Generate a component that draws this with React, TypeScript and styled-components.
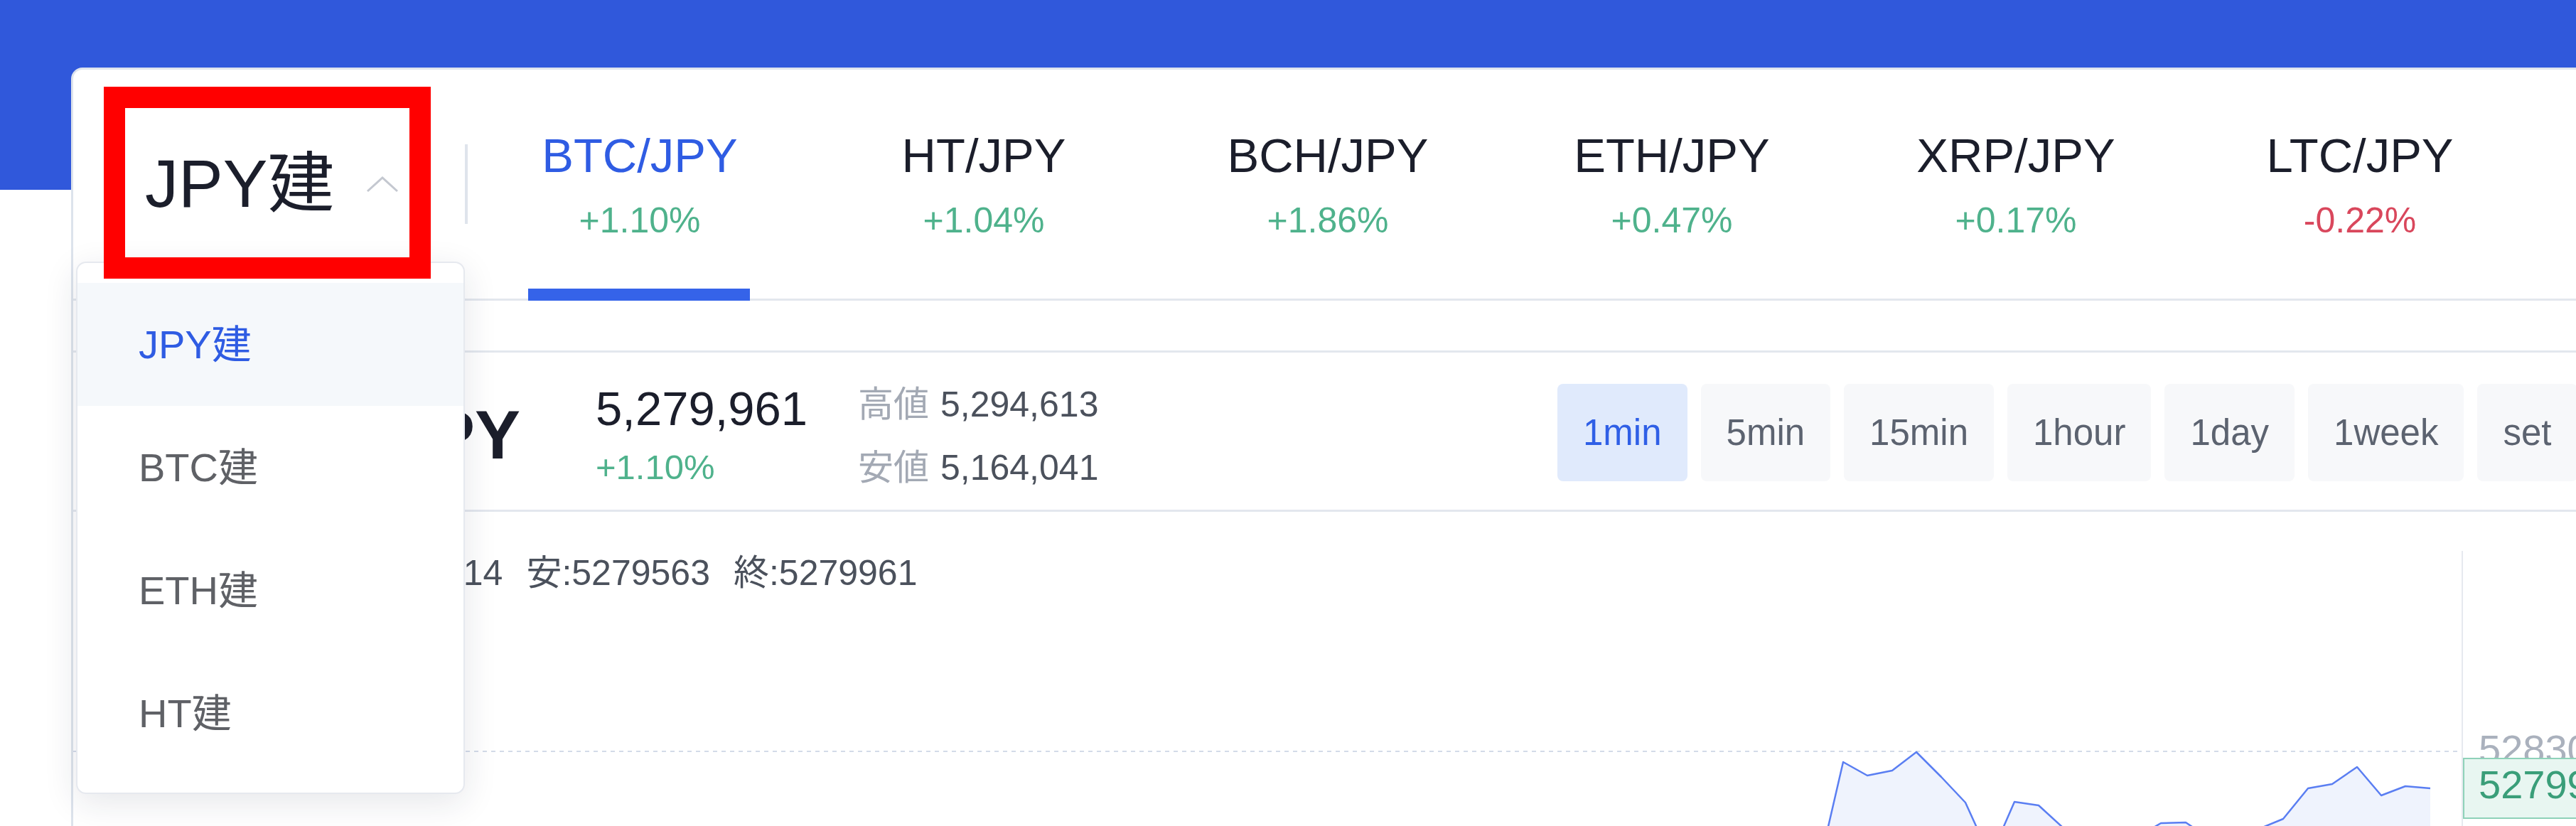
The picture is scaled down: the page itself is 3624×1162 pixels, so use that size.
import React from "react";
import styled, { createGlobalStyle } from "styled-components";

const GlobalStyle = createGlobalStyle`
  html, body { margin: 0; padding: 0; background: #ffffff; overflow: hidden; }
  body { font-family: "Liberation Sans", "Noto Sans CJK JP", sans-serif; }
  *, *::before, *::after { box-sizing: border-box; }
`;

const Page = styled.div`
  width: 3624px;
  height: 1162px;
  overflow: hidden;
  padding: 95px 0 0 100px;
  background: linear-gradient(#3058db 0, #3058db 267px, #ffffff 267px);
`;

const Card = styled.div`
  width: 3640px;
  min-height: 1200px;
  background: #ffffff;
  border-top: 3px solid #dfe5ee;
  border-left: 3px solid #dde3ec;
  border-top-left-radius: 16px;
`;

/* ---------- tab bar ---------- */

const TabBar = styled.div`
  display: flex;
  height: 325px;
  border-bottom: 3px solid #e3e7ee;
`;

const Selector = styled.div`
  position: relative;
  flex: 0 0 551px;
  display: flex;
  align-items: center;
  padding-left: 101px;
`;

const SelectorLabel = styled.span`
  font-size: 94px;
  line-height: 1;
  color: #1b1e2b;
  white-space: nowrap;
`;

const Chevron = styled.svg`
  width: 46px;
  height: 24px;
  margin-left: 45px;
  flex: none;
`;

const Divider = styled.div`
  flex: 0 0 4px;
  height: 112px;
  align-self: center;
  background: #dfe4ec;
`;

const Tab = styled.div<{ $active?: boolean }>`
  position: relative;
  flex: 0 0 484px;
  display: flex;
  flex-direction: column;
  align-items: center;
  justify-content: center;
  padding-top: 2px;
  &::after {
    content: "";
    display: ${(p) => (p.$active ? "block" : "none")};
    position: absolute;
    left: 50%;
    bottom: -3px;
    width: 312px;
    margin-left: -157px;
    height: 17px;
    background: #3563e9;
  }
`;

const TabName = styled.div<{ $active?: boolean }>`
  font-size: 67px;
  line-height: 1;
  color: ${(p) => (p.$active ? "#2f5ce3" : "#1b1e2b")};
  white-space: nowrap;
`;

const Change = styled.div<{ $down?: boolean; $size?: number }>`
  font-size: ${(p) => p.$size ?? 50}px;
  line-height: 1;
  color: ${(p) => (p.$down ? "#d9475c" : "#4fb28c")};
  white-space: nowrap;
`;

const TabChange = styled(Change)`
  margin-top: 33px;
`;

/* ---------- dropdown ---------- */

const Dropdown = styled.ul`
  position: absolute;
  left: 4px;
  top: 270px;
  width: 547px;
  height: 749px;
  margin: 0;
  padding: 28px 0 0;
  list-style: none;
  background: #ffffff;
  border: 2px solid #e6e9ef;
  border-radius: 14px;
  box-shadow: 0 12px 48px rgba(25, 35, 60, 0.11);
  z-index: 10;
`;

const DropItem = styled.li<{ $active?: boolean }>`
  height: 173px;
  display: flex;
  align-items: center;
  padding-left: 86px;
  font-size: 56px;
  line-height: 1;
  color: ${(p) => (p.$active ? "#2f5ce3" : "#5f6166")};
  background: ${(p) => (p.$active ? "#f5f8fb" : "transparent")};
`;

const Highlight = styled.div`
  position: absolute;
  left: 43px;
  top: 24px;
  width: 460px;
  height: 270px;
  border: 30px solid #ff0000;
  z-index: 20;
  pointer-events: none;
`;

/* ---------- price panel ---------- */

const PricePanel = styled.div`
  margin-top: 70px;
  height: 227px;
  padding-top: 10px;
  border-top: 3px solid #e3e7ee;
  border-bottom: 3px solid #e3e7ee;
  display: flex;
  align-items: center;
`;

const PairName = styled.div`
  flex: 0 0 629px;
  text-align: right;
  font-size: 96px;
  font-weight: 700;
  line-height: 1;
  color: #1b1e2b;
  white-space: nowrap;
`;

const PriceBlock = styled.div`
  flex: 0 0 475px;
  padding-left: 106px;
  display: flex;
  flex-direction: column;
`;

const LastPrice = styled.div`
  font-size: 67px;
  line-height: 1;
  color: #1b1e2b;
`;

const PriceChange = styled(Change)`
  margin-top: 25px;
`;

const HighLow = styled.div`
  flex: 0 0 984px;
  display: flex;
  flex-direction: column;
  gap: 39px;
  margin-top: 4px;
`;

const StatRow = styled.div`
  font-size: 50px;
  line-height: 50px;
  white-space: nowrap;
  color: #4b515c;
`;

const StatLabel = styled.span`
  color: #a3a9b4;
  margin-right: 16px;
`;

const Timeframes = styled.div`
  display: flex;
  gap: 19px;
  margin-top: -6px;
`;

const TfButton = styled.div<{ $active?: boolean }>`
  height: 137px;
  padding: 0 36px;
  display: flex;
  align-items: center;
  border-radius: 8px;
  font-size: 51px;
  line-height: 1;
  white-space: nowrap;
  color: ${(p) => (p.$active ? "#2f5fe6" : "#5c6370")};
  background: ${(p) => (p.$active ? "#e0eafc" : "#f7f8fa")};
`;

/* ---------- chart ---------- */

const ChartPanel = styled.div`
  display: flex;
  padding-top: 55px;
  height: 500px;
`;

const Plot = styled.div`
  position: relative;
  flex: 0 0 3360px;
  height: 445px;
`;

const Legend = styled.div`
  position: absolute;
  top: 6px;
  left: 58px;
  display: flex;
  gap: 33px;
  font-size: 50px;
  line-height: 1;
  color: #4b515c;
  white-space: nowrap;
`;

const ChartSvg = styled.svg`
  display: block;
`;

const Axis = styled.div`
  position: relative;
  flex: 1;
  border-left: 2px solid #e6e9ef;
`;

const AxisLabel = styled.div`
  position: absolute;
  left: 22px;
  top: 251px;
  font-size: 56px;
  line-height: 1;
  color: #aab1bd;
`;

const PriceTag = styled.div`
  position: absolute;
  left: 0;
  top: 291px;
  width: 320px;
  height: 86px;
  padding-left: 20px;
  border: 2px solid #8fd2b9;
  background: #e8f6f1;
  font-size: 56px;
  line-height: 72px;
  color: #3a9e79;
`;

const tabs = [
  { name: "BTC/JPY", change: "+1.10%", active: true },
  { name: "HT/JPY", change: "+1.04%" },
  { name: "BCH/JPY", change: "+1.86%" },
  { name: "ETH/JPY", change: "+0.47%" },
  { name: "XRP/JPY", change: "+0.17%" },
  { name: "LTC/JPY", change: "-0.22%", down: true },
];

const markets = ["JPY建", "BTC建", "ETH建", "HT建"];
const frames = ["1min", "5min", "15min", "1hour", "1day", "1week", "set"];

const pts: [number, number][] = [
  [2300, 470], [2456, 444], [2490, 297], [2524, 316], [2559, 309], [2593, 283],
  [2628, 318], [2662, 354], [2697, 431], [2731, 353], [2765, 358], [2800, 390],
  [2834, 425], [2869, 420], [2903, 403], [2937, 383], [2972, 382], [3006, 405],
  [3041, 417], [3075, 391], [3109, 377], [3144, 334], [3178, 328], [3213, 304],
  [3247, 344], [3281, 331], [3316, 334],
];

const linePath = pts.map((p, i) => `${i ? "L" : "M"}${p[0]} ${p[1]}`).join(" ");
const areaPath = `${linePath} L3316 445 L2300 445 Z`;

export default function App() {
  return (
    <>
      <GlobalStyle />
      <Page>
        <Card>
          <TabBar>
            <Selector>
              <SelectorLabel>JPY建</SelectorLabel>
              <Chevron viewBox="0 0 46 24">
                <polyline points="2,22 23,3 44,22" fill="none" stroke="#c4c8d0" strokeWidth="3" />
              </Chevron>
              <Highlight />
              <Dropdown>
                {markets.map((m, i) => (
                  <DropItem key={m} $active={i === 0}>
                    {m}
                  </DropItem>
                ))}
              </Dropdown>
            </Selector>
            <Divider />
            {tabs.map((t) => (
              <Tab key={t.name} $active={t.active}>
                <TabName $active={t.active}>{t.name}</TabName>
                <TabChange $down={t.down}>{t.change}</TabChange>
              </Tab>
            ))}
          </TabBar>

          <PricePanel>
            <PairName>BTC/JPY</PairName>
            <PriceBlock>
              <LastPrice>5,279,961</LastPrice>
              <PriceChange $size={49}>+1.10%</PriceChange>
            </PriceBlock>
            <HighLow>
              <StatRow>
                <StatLabel>高値</StatLabel>5,294,613
              </StatRow>
              <StatRow>
                <StatLabel>安値</StatLabel>5,164,041
              </StatRow>
            </HighLow>
            <Timeframes>
              {frames.map((f, i) => (
                <TfButton key={f} $active={i === 0}>
                  {f}
                </TfButton>
              ))}
            </Timeframes>
          </PricePanel>

          <ChartPanel>
            <Plot>
              <ChartSvg width="3360" height="445" viewBox="0 0 3360 445">
                <line x1="0" y1="282" x2="3360" y2="282" stroke="#d3dbe8" strokeWidth="2" strokeDasharray="6 6" />
                <path d={areaPath} fill="#eff3fd" />
                <path d={linePath} fill="none" stroke="#5a7ef2" strokeWidth="2.5" strokeLinejoin="round" />
              </ChartSvg>
              <Legend>
                <span>始:5279563</span>
                <span>高:5280114</span>
                <span>安:5279563</span>
                <span>終:5279961</span>
              </Legend>
            </Plot>
            <Axis>
              <AxisLabel>5283000</AxisLabel>
              <PriceTag>5279961</PriceTag>
            </Axis>
          </ChartPanel>
        </Card>
      </Page>
    </>
  );
}
